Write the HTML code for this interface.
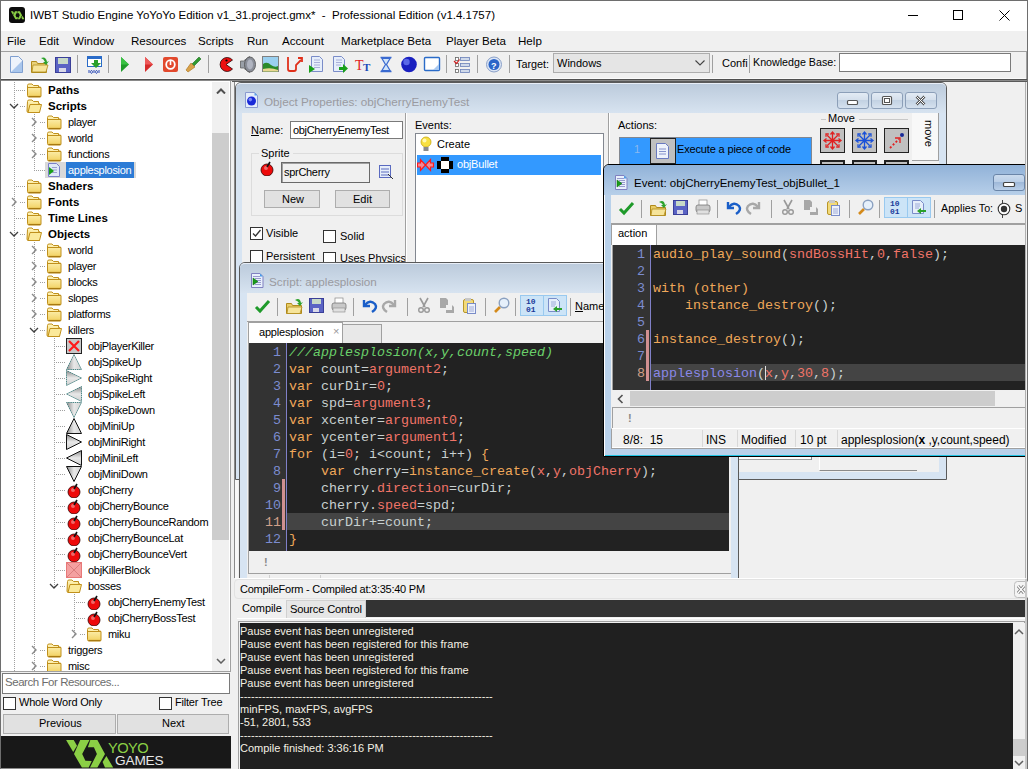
<!DOCTYPE html>
<html><head><meta charset="utf-8">
<style>
*{box-sizing:border-box;margin:0;padding:0}
html,body{width:1028px;height:769px;overflow:hidden;background:#f0f0f0;font-family:"Liberation Sans",sans-serif;font-size:11px;color:#000;position:relative}
.a{position:absolute}
.t{position:absolute;white-space:pre;line-height:1}
.mono{font-family:"Liberation Mono",monospace}
</style></head><body>
<!-- outer frame -->
<div class="a" style="left:0;top:0;width:1028px;height:769px;border-left:1px solid #6e6e6e;border-top:1px solid #6e6e6e;border-right:1px solid #6e6e6e"></div>
<!-- title bar -->
<div class="a" style="left:1px;top:1px;width:1026px;height:30px;background:#fff"></div>
<div class="a" style="left:9px;top:7px;width:16px;height:16px;background:#0c0c0c;border-radius:3px"></div>
<svg class="a" style="left:0;top:0" width="30" height="30"><g transform="translate(10.8 11.2) scale(0.29) translate(-66 -740)">
<path d="M66.1 740.1 L73.7 740.1 L77 745.8 L73.2 752.1Z" fill="#8bcf45"/>
<path d="M80.2 740.1 L89.5 740.1 L82.2 754 L85.4 760.8 L91.7 761.1 L88.7 767.6 L81.9 767.6 L74 754Z" fill="#8bcf45"/>
<path d="M90.3 740.1 L97.4 740.1 L105 754 L97.4 767.6 L90 767.6 L96.9 754 L93.9 747.2 L87.9 747.2Z" fill="#8bcf45"/>
<path d="M102.6 762.1 L106.4 755.9 L113.2 767.6 L105 767.6Z" fill="#8bcf45"/></g></svg>
<div class="t" style="left:30px;top:10px;font-size:11.5px;color:#000">IWBT Studio Engine YoYoYo Edition v1_31.project.gmx*&nbsp; -&nbsp; Professional Edition (v1.4.1757)</div>
<div class="a" style="left:908px;top:15px;width:10px;height:1px;background:#000"></div>
<div class="a" style="left:953px;top:10px;width:10px;height:10px;border:1px solid #000"></div>
<svg class="a" style="left:999px;top:10px" width="11" height="11"><path d="M0.5 0.5 L10.5 10.5 M10.5 0.5 L0.5 10.5" stroke="#000" stroke-width="1"/></svg>

<!-- menu bar -->
<div class="a" style="left:1px;top:31px;width:1026px;height:20px;background:#f0f0f0"></div>
<div class="t" style="top:35px;font-size:11.6px;left:0"><span class="t" style="left:7px">File</span><span class="t" style="left:39px">Edit</span><span class="t" style="left:73px">Window</span><span class="t" style="left:131px">Resources</span><span class="t" style="left:198px">Scripts</span><span class="t" style="left:247px">Run</span><span class="t" style="left:282px">Account</span><span class="t" style="left:341px">Marketplace Beta</span><span class="t" style="left:446px">Player Beta</span><span class="t" style="left:518px">Help</span></div>

<!-- toolbar -->
<div class="a" style="left:1px;top:51px;width:1026px;height:27px;background:#f0f0f0;border-top:1px solid #a0a0a0"></div><div class="a" style="left:1px;top:78px;width:1026px;height:1px;background:#fafafa"></div>
<div class="a" style="left:1026px;top:52px;width:1px;height:27px;background:#a0a0a0"></div>
<!-- separators -->
<div class="a" style="left:77px;top:55px;width:1px;height:18px;background:#a0a0a0"></div>
<div class="a" style="left:108px;top:55px;width:1px;height:18px;background:#a0a0a0"></div>
<div class="a" style="left:208px;top:55px;width:1px;height:18px;background:#a0a0a0"></div>
<div class="a" style="left:446px;top:55px;width:1px;height:18px;background:#a0a0a0"></div>
<div class="a" style="left:477px;top:55px;width:1px;height:18px;background:#a0a0a0"></div>
<div class="a" style="left:509px;top:55px;width:1px;height:18px;background:#a0a0a0"></div>
<div class="a" style="left:712px;top:55px;width:1px;height:18px;background:#a0a0a0"></div>
<div class="a" style="left:749px;top:55px;width:1px;height:18px;background:#a0a0a0"></div>
<!-- toolbar icons -->
<svg class="a" style="left:0;top:52px" width="510" height="26" viewBox="0 52 510 26">
 <!-- new -->
 <path d="M10.5 56.5 h8 l4 4 v12 h-12z" fill="#eef3fb" stroke="#7f9fd0"/><path d="M11 72 L22 61 V72Z" fill="#a9c6ec"/>
 <!-- open -->
 <path d="M31.5 61.5 h5 l1 2 h9 v9 h-15z" fill="#e9d27a" stroke="#b08a1c"/><path d="M33 65 h15 l-2 7 h-14z" fill="#f6e49a" stroke="#b08a1c" stroke-width="0.8"/><path d="M41 58 q5 -2 6 4 l2 -1 -3 4 -3 -3 2 0 q-1 -3 -4 -4z" fill="#2ea22e"/>
 <!-- save -->
 <rect x="55.5" y="57.5" width="15" height="15" fill="#5a63c4" stroke="#3a3f98"/><rect x="58" y="58" width="10" height="6" fill="#c7d9c7"/><rect x="59" y="68" width="7" height="4" fill="#d8d8e8"/>
 <!-- create exe -->
 <rect x="87.5" y="56.5" width="14" height="10" fill="#fff" stroke="#2a6bc8"/><rect x="88" y="57" width="13" height="2" fill="#2a6bc8"/><path d="M94 60 h4 v3 h3 l-5 5 -5 -5 h3z" fill="#2aa02a"/><path d="M89 70v3M91.5 70.5a1 1.4 0 1 0 .01 0M94 70v3M96.5 70.5a1 1.4 0 1 0 .01 0M99 70v3" stroke="#2a4ab8" stroke-width="1" fill="none"/>
 <!-- run -->
 <path d="M121 57 L129 64.5 L121 72Z" fill="#1f9a2a"/><path d="M121 57 L129 64.5 L121 64.5Z" fill="#39c143"/>
 <!-- debug -->
 <path d="M145 57 L153 64.5 L145 72Z" fill="#d52b2b"/><path d="M145 57 L153 64.5 L145 64.5Z" fill="#ee5a5a"/>
 <!-- stop -->
 <rect x="163" y="57" width="15" height="15" rx="2" fill="#e2492d"/><circle cx="170.5" cy="64.5" r="4.3" fill="none" stroke="#fff" stroke-width="1.8"/><rect x="169.7" y="61" width="1.6" height="4" fill="#fff"/>
 <!-- clean brush -->
 <path d="M192 64 l7-7 2 2 -7 7z" fill="#2f9a30" stroke="#1f6a20" stroke-width=".6"/><path d="M186 70 l5-7 4 4 -7 5z" fill="#d9a24a" stroke="#a8701a" stroke-width=".6"/>
 <!-- sprite pacman -->
 <path d="M232.5 60 A7 7 0 1 0 232.5 69 L226 64.5Z" fill="#ee1010" stroke="#200" stroke-width=".8"/><circle cx="226.5" cy="60.5" r="1.1" fill="#000"/>
 <!-- sound -->
 <path d="M240.5 61 h3 l6 -4.5 v16 l-6 -4.5 h-3z" fill="#9aa0a8" stroke="#606060" stroke-width=".8"/><ellipse cx="250" cy="64.5" rx="5.5" ry="7.5" fill="#8a8e98" stroke="#505050" stroke-width=".8"/><ellipse cx="250" cy="64.5" rx="3" ry="5" fill="#b0b4c0"/>
 <!-- background -->
 <rect x="262.5" y="56.5" width="16" height="15" fill="#9ad0f0" stroke="#808080"/><path d="M263 64 q4 -3 8 1 q4 3 7 1 v5.5 h-15z" fill="#2a8a2a"/><path d="M263 69 q8 -2 15 1 v1.5 h-15z" fill="#e8d890"/>
 <!-- path -->
 <path d="M288 57 v12 q0 2 2 2 h4 q2 0 2-2 v-4 l5-5" fill="none" stroke="#e0301a" stroke-width="1.8"/><path d="M298 58 h4 v4" fill="none" stroke="#e0301a" stroke-width="1.8"/>
 <!-- script -->
 <path d="M311.5 56.5 h8 l3 3 v12 h-11z" fill="#e6eefa" stroke="#7a8cc8"/><path d="M314 60h6M314 62.5h6M314 65h6M314 67.5h6" stroke="#9aa0d0" stroke-width=".8"/><path d="M309 65 l6 4 -6 4z" fill="#18a018"/>
 <!-- shader -->
 <path d="M333.5 56.5 h8 l3 3 v12 h-11z" fill="#e6eefa" stroke="#7a8cc8"/><path d="M336 60h6M336 62.5h6M336 65h5" stroke="#9aa0d0" stroke-width=".8"/><path d="M339 67 h4 v-3 l5 4.5 -5 4.5 v-3 h-4z" fill="#18a018"/>
 <!-- font -->
 <text x="355" y="70" font-size="14" fill="#e02020" font-family="Liberation Serif">T</text><text x="363" y="71" font-size="11" fill="#1a4ab8" font-family="Liberation Serif" font-weight="bold">T</text>
 <!-- timeline -->
 <path d="M380.5 57.5 h11 M380.5 71.5 h11" stroke="#3a6ad0" stroke-width="1.6"/><path d="M382 58.5 h8 l-3.5 6 3.5 6 h-8 l3.5-6z" fill="#d0e4fa" stroke="#3a6ad0" stroke-width="1.2"/>
 <!-- object -->
 <circle cx="409" cy="64.5" r="7.8" fill="#1a20c0"/><circle cx="406.5" cy="62" r="3.2" fill="#5a68e8"/>
 <!-- room -->
 <rect x="424.5" y="57.5" width="15" height="13" rx="1" fill="#fff" stroke="#2a6bc8" stroke-width="1.4"/><path d="M433 70 L439 64 V70Z" fill="#a8c8f0"/>
 <!-- settings -->
 <rect x="455.5" y="57.5" width="3" height="3" fill="#fff" stroke="#666" stroke-width=".8"/><rect x="460.5" y="57.5" width="9" height="3" fill="#cfd9ea" stroke="#6a80b8" stroke-width=".8"/>
 <rect x="455.5" y="63.5" width="3" height="3" fill="#fff" stroke="#666" stroke-width=".8"/><rect x="460.5" y="63.5" width="9" height="3" fill="#cfd9ea" stroke="#6a80b8" stroke-width=".8"/>
 <rect x="455.5" y="69.5" width="3" height="3" fill="#fff" stroke="#666" stroke-width=".8"/><rect x="460.5" y="69.5" width="9" height="3" fill="#cfd9ea" stroke="#6a80b8" stroke-width=".8"/>
 <path d="M454 61 l2.5 2.5 3-4" stroke="#d02020" fill="none" stroke-width="1.2"/>
 <!-- help -->
 <circle cx="494" cy="64.5" r="7.5" fill="#dbe5f5" stroke="#8aa0c8"/><circle cx="494" cy="64.5" r="5.5" fill="#2a64c8"/><text x="491" y="68.5" font-size="9" fill="#fff" font-weight="bold" font-family="Liberation Sans">?</text>
</svg>
<div class="t" style="left:516px;top:59px;font-size:10.8px">Target:</div>
<div class="a" style="left:553px;top:53px;width:157px;height:20px;background:#e5e5e5;border:1px solid #adadad"></div>
<div class="t" style="left:557px;top:58px;font-size:11px">Windows</div>
<svg class="a" style="left:695px;top:60px" width="10" height="6"><path d="M0.5 0.5 L5 5 L9.5 0.5" fill="none" stroke="#444" stroke-width="1.1"/></svg>
<div class="t" style="left:722px;top:58px;font-size:11px">Confi</div>
<div class="t" style="left:753px;top:57px;font-size:10.7px">Knowledge Base:</div>
<div class="a" style="left:839px;top:53px;width:172px;height:19px;background:#fff;border:1px solid #7a7a7a"></div>
<!-- left panel -->
<div class="a" style="left:1px;top:81px;width:230px;height:591px;background:#fff;border-right:1px solid #a0a0a0;border-bottom:1px solid #a0a0a0"></div>
<div class="a" style="left:231px;top:80px;width:3px;height:689px;background:#f0f0f0"></div>
<div class="a" style="left:1px;top:79px;width:1026px;height:1px;background:#505050"></div>
<div class="a" style="left:1px;top:80px;width:1026px;height:1px;background:#8a8a8a"></div>
<div class="a" style="left:232px;top:81px;width:795px;height:1px;background:#5a5a5a"></div>
<div class="a" style="left:1px;top:82px;width:211px;height:589px;overflow:hidden">
<svg width="0" height="0" style="position:absolute"><defs>
<linearGradient id="fg" x1="0" y1="0" x2="0" y2="1"><stop offset="0" stop-color="#fff6c0"/><stop offset="1" stop-color="#f2d160"/></linearGradient>
<linearGradient id="sg" x1="0" y1="0" x2="1" y2="0"><stop offset="0" stop-color="#8a8a8a"/><stop offset=".5" stop-color="#e8e8e8"/><stop offset="1" stop-color="#d0d0d0"/></linearGradient>
<linearGradient id="sgv" x1="0" y1="0" x2="0" y2="1"><stop offset="0" stop-color="#8a8a8a"/><stop offset=".5" stop-color="#e8e8e8"/><stop offset="1" stop-color="#d0d0d0"/></linearGradient>
<symbol id="folder" viewBox="0 0 16 16"><path d="M1.5 3.5 q0-1.5 1.5-1.5 h3 l1.5 1.5 h5 v1.5 h1.5 q1 0 1 1 v8 q0 1-1 1 h-11 q-1.5 0-1.5-1.5z" fill="url(#fg)" stroke="#c0901c"/><path d="M2 5.5 h13" stroke="#c0901c"/><path d="M2.5 14.5 h12" stroke="#a87a10" stroke-width="1.2"/></symbol>
<symbol id="folderopen" viewBox="0 0 16 16"><path d="M1.5 3.5 q0-1.5 1.5-1.5 h3 l1.5 1.5 h5 v2 h1 v9 h-11 q-1.5 0-1.5-1.5z" fill="url(#fg)" stroke="#c0901c"/><path d="M2 14.5 l2-8 h11.5 l-2 8z" fill="#fbe99a" stroke="#c0901c"/></symbol>
<symbol id="script" viewBox="0 0 16 16"><path d="M2.5 1.5 h8 l3 3 v10 h-11z" fill="#dfe8f8" stroke="#7a80c8"/><path d="M6 5.5h5M6 8h5M6 10.5h5" stroke="#9aa0d0"/><path d="M3 5 l5 4 -5 4z" fill="#18a018"/></symbol>
<symbol id="killer" viewBox="0 0 16 16"><rect x=".5" y=".5" width="15" height="15" fill="#c8c8c8" stroke="#222"/><path d="M3 3 L13 13 M13 3 L3 13" stroke="#ff1a1a" stroke-width="2.2"/></symbol>
<symbol id="spikeU" viewBox="0 0 16 16"><path d="M8 0.5 L15.5 15.5 H0.5Z" fill="url(#sg)" stroke="#3a7a7a" stroke-width=".9" stroke-dasharray="1.5 .7"/></symbol>
<symbol id="spikeD" viewBox="0 0 16 16"><path d="M8 15.5 L15.5 0.5 H0.5Z" fill="url(#sg)" stroke="#3a7a7a" stroke-width=".9" stroke-dasharray="1.5 .7"/></symbol>
<symbol id="spikeR" viewBox="0 0 16 16"><path d="M15.5 8 L0.5 15.5 V0.5Z" fill="url(#sgv)" stroke="#3a7a7a" stroke-width=".9" stroke-dasharray="1.5 .7"/></symbol>
<symbol id="spikeL" viewBox="0 0 16 16"><path d="M0.5 8 L15.5 15.5 V0.5Z" fill="url(#sgv)" stroke="#3a7a7a" stroke-width=".9" stroke-dasharray="1.5 .7"/></symbol>
<symbol id="cherry" viewBox="0 0 16 16"><circle cx="8" cy="10" r="6" fill="#ee0a0a" stroke="#300" stroke-width=".8"/><circle cx="7" cy="8" r="2" fill="#f06868"/><path d="M8 7 L11 2" stroke="#111" stroke-width="1.6"/></symbol>
<symbol id="kblock" viewBox="0 0 16 16"><rect x=".5" y=".5" width="15" height="15" fill="#f4a0a0" stroke="#e87878"/><path d="M1 1 L15 15 M15 1 L1 15" stroke="#d07070" stroke-width=".7"/></symbol>
<symbol id="mU" viewBox="0 0 16 16"><path d="M8 0.5 L15.5 15.5 H0.5Z" fill="url(#sg)" stroke="#111" stroke-width="1"/></symbol>
<symbol id="mD" viewBox="0 0 16 16"><path d="M8 15.5 L15.5 0.5 H0.5Z" fill="url(#sg)" stroke="#111" stroke-width="1"/></symbol>
<symbol id="mR" viewBox="0 0 16 16"><path d="M15.5 8 L0.5 15.5 V0.5Z" fill="url(#sgv)" stroke="#111" stroke-width="1"/></symbol>
<symbol id="mL" viewBox="0 0 16 16"><path d="M0.5 8 L15.5 15.5 V0.5Z" fill="url(#sgv)" stroke="#111" stroke-width="1"/></symbol>
</defs></svg>
<div class="a" style="left:13px;top:0px;width:1px;height:589px;background:repeating-linear-gradient(#a0a0a0 0 1px,transparent 1px 2px)"></div>
<div class="a" style="left:33px;top:32px;width:1px;height:57px;background:repeating-linear-gradient(#a0a0a0 0 1px,transparent 1px 2px)"></div>
<div class="a" style="left:33px;top:160px;width:1px;height:429px;background:repeating-linear-gradient(#a0a0a0 0 1px,transparent 1px 2px)"></div>
<div class="a" style="left:53px;top:256px;width:1px;height:249px;background:repeating-linear-gradient(#a0a0a0 0 1px,transparent 1px 2px)"></div>
<div class="a" style="left:73px;top:512px;width:1px;height:41px;background:repeating-linear-gradient(#a0a0a0 0 1px,transparent 1px 2px)"></div>
<div class="a" style="left:13px;top:8px;width:12px;height:1px;background:repeating-linear-gradient(90deg,#a0a0a0 0 1px,transparent 1px 2px)"></div>
<svg class="a" style="left:25px;top:0px" width="16" height="16"><use href="#folder"/></svg>
<div class="t" style="left:47px;top:3px;font-size:11.5px;font-weight:bold;color:#000">Paths</div>
<div class="a" style="left:19px;top:24px;width:6px;height:1px;background:repeating-linear-gradient(90deg,#a0a0a0 0 1px,transparent 1px 2px)"></div>
<svg class="a" style="left:8px;top:21px" width="10" height="6"><path d="M1 1 L5 5 L9 1" fill="none" stroke="#404040" stroke-width="1.3"/></svg>
<svg class="a" style="left:25px;top:16px" width="16" height="16"><use href="#folderopen"/></svg>
<div class="t" style="left:47px;top:19px;font-size:11.5px;font-weight:bold;color:#000">Scripts</div>
<div class="a" style="left:39px;top:40px;width:6px;height:1px;background:repeating-linear-gradient(90deg,#a0a0a0 0 1px,transparent 1px 2px)"></div>
<svg class="a" style="left:30px;top:35px" width="6" height="10"><path d="M1 1 L5 5 L1 9" fill="none" stroke="#8a8a8a" stroke-width="1.4"/></svg>
<svg class="a" style="left:45px;top:32px" width="16" height="16"><use href="#folder"/></svg>
<div class="t" style="left:67px;top:35px;font-size:11px;letter-spacing:-0.3px;color:#000">player</div>
<div class="a" style="left:39px;top:56px;width:6px;height:1px;background:repeating-linear-gradient(90deg,#a0a0a0 0 1px,transparent 1px 2px)"></div>
<svg class="a" style="left:30px;top:51px" width="6" height="10"><path d="M1 1 L5 5 L1 9" fill="none" stroke="#8a8a8a" stroke-width="1.4"/></svg>
<svg class="a" style="left:45px;top:48px" width="16" height="16"><use href="#folder"/></svg>
<div class="t" style="left:67px;top:51px;font-size:11px;letter-spacing:-0.3px;color:#000">world</div>
<div class="a" style="left:39px;top:72px;width:6px;height:1px;background:repeating-linear-gradient(90deg,#a0a0a0 0 1px,transparent 1px 2px)"></div>
<svg class="a" style="left:30px;top:67px" width="6" height="10"><path d="M1 1 L5 5 L1 9" fill="none" stroke="#8a8a8a" stroke-width="1.4"/></svg>
<svg class="a" style="left:45px;top:64px" width="16" height="16"><use href="#folder"/></svg>
<div class="t" style="left:67px;top:67px;font-size:11px;letter-spacing:-0.3px;color:#000">functions</div>
<div class="a" style="left:33px;top:88px;width:12px;height:1px;background:repeating-linear-gradient(90deg,#a0a0a0 0 1px,transparent 1px 2px)"></div>
<div class="a" style="left:44px;top:80px;width:91px;height:16px;background:#d9d9d9"></div>
<div class="a" style="left:65px;top:80px;width:68px;height:16px;background:#2b7bd6"></div>
<svg class="a" style="left:45px;top:80px" width="16" height="16"><use href="#script"/></svg>
<div class="t" style="left:67px;top:83px;font-size:11px;letter-spacing:-0.3px;color:#fff">applesplosion</div>
<div class="a" style="left:13px;top:104px;width:12px;height:1px;background:repeating-linear-gradient(90deg,#a0a0a0 0 1px,transparent 1px 2px)"></div>
<svg class="a" style="left:25px;top:96px" width="16" height="16"><use href="#folder"/></svg>
<div class="t" style="left:47px;top:99px;font-size:11.5px;font-weight:bold;color:#000">Shaders</div>
<div class="a" style="left:19px;top:120px;width:6px;height:1px;background:repeating-linear-gradient(90deg,#a0a0a0 0 1px,transparent 1px 2px)"></div>
<svg class="a" style="left:10px;top:115px" width="6" height="10"><path d="M1 1 L5 5 L1 9" fill="none" stroke="#8a8a8a" stroke-width="1.4"/></svg>
<svg class="a" style="left:25px;top:112px" width="16" height="16"><use href="#folder"/></svg>
<div class="t" style="left:47px;top:115px;font-size:11.5px;font-weight:bold;color:#000">Fonts</div>
<div class="a" style="left:13px;top:136px;width:12px;height:1px;background:repeating-linear-gradient(90deg,#a0a0a0 0 1px,transparent 1px 2px)"></div>
<svg class="a" style="left:25px;top:128px" width="16" height="16"><use href="#folder"/></svg>
<div class="t" style="left:47px;top:131px;font-size:11.5px;font-weight:bold;color:#000">Time Lines</div>
<div class="a" style="left:19px;top:152px;width:6px;height:1px;background:repeating-linear-gradient(90deg,#a0a0a0 0 1px,transparent 1px 2px)"></div>
<svg class="a" style="left:8px;top:149px" width="10" height="6"><path d="M1 1 L5 5 L9 1" fill="none" stroke="#404040" stroke-width="1.3"/></svg>
<svg class="a" style="left:25px;top:144px" width="16" height="16"><use href="#folderopen"/></svg>
<div class="t" style="left:47px;top:147px;font-size:11.5px;font-weight:bold;color:#000">Objects</div>
<div class="a" style="left:39px;top:168px;width:6px;height:1px;background:repeating-linear-gradient(90deg,#a0a0a0 0 1px,transparent 1px 2px)"></div>
<svg class="a" style="left:30px;top:163px" width="6" height="10"><path d="M1 1 L5 5 L1 9" fill="none" stroke="#8a8a8a" stroke-width="1.4"/></svg>
<svg class="a" style="left:45px;top:160px" width="16" height="16"><use href="#folder"/></svg>
<div class="t" style="left:67px;top:163px;font-size:11px;letter-spacing:-0.3px;color:#000">world</div>
<div class="a" style="left:39px;top:184px;width:6px;height:1px;background:repeating-linear-gradient(90deg,#a0a0a0 0 1px,transparent 1px 2px)"></div>
<svg class="a" style="left:30px;top:179px" width="6" height="10"><path d="M1 1 L5 5 L1 9" fill="none" stroke="#8a8a8a" stroke-width="1.4"/></svg>
<svg class="a" style="left:45px;top:176px" width="16" height="16"><use href="#folder"/></svg>
<div class="t" style="left:67px;top:179px;font-size:11px;letter-spacing:-0.3px;color:#000">player</div>
<div class="a" style="left:39px;top:200px;width:6px;height:1px;background:repeating-linear-gradient(90deg,#a0a0a0 0 1px,transparent 1px 2px)"></div>
<svg class="a" style="left:30px;top:195px" width="6" height="10"><path d="M1 1 L5 5 L1 9" fill="none" stroke="#8a8a8a" stroke-width="1.4"/></svg>
<svg class="a" style="left:45px;top:192px" width="16" height="16"><use href="#folder"/></svg>
<div class="t" style="left:67px;top:195px;font-size:11px;letter-spacing:-0.3px;color:#000">blocks</div>
<div class="a" style="left:39px;top:216px;width:6px;height:1px;background:repeating-linear-gradient(90deg,#a0a0a0 0 1px,transparent 1px 2px)"></div>
<svg class="a" style="left:30px;top:211px" width="6" height="10"><path d="M1 1 L5 5 L1 9" fill="none" stroke="#8a8a8a" stroke-width="1.4"/></svg>
<svg class="a" style="left:45px;top:208px" width="16" height="16"><use href="#folder"/></svg>
<div class="t" style="left:67px;top:211px;font-size:11px;letter-spacing:-0.3px;color:#000">slopes</div>
<div class="a" style="left:39px;top:232px;width:6px;height:1px;background:repeating-linear-gradient(90deg,#a0a0a0 0 1px,transparent 1px 2px)"></div>
<svg class="a" style="left:30px;top:227px" width="6" height="10"><path d="M1 1 L5 5 L1 9" fill="none" stroke="#8a8a8a" stroke-width="1.4"/></svg>
<svg class="a" style="left:45px;top:224px" width="16" height="16"><use href="#folder"/></svg>
<div class="t" style="left:67px;top:227px;font-size:11px;letter-spacing:-0.3px;color:#000">platforms</div>
<div class="a" style="left:39px;top:248px;width:6px;height:1px;background:repeating-linear-gradient(90deg,#a0a0a0 0 1px,transparent 1px 2px)"></div>
<svg class="a" style="left:28px;top:245px" width="10" height="6"><path d="M1 1 L5 5 L9 1" fill="none" stroke="#404040" stroke-width="1.3"/></svg>
<svg class="a" style="left:45px;top:240px" width="16" height="16"><use href="#folderopen"/></svg>
<div class="t" style="left:67px;top:243px;font-size:11px;letter-spacing:-0.3px;color:#000">killers</div>
<div class="a" style="left:53px;top:264px;width:12px;height:1px;background:repeating-linear-gradient(90deg,#a0a0a0 0 1px,transparent 1px 2px)"></div>
<svg class="a" style="left:65px;top:256px" width="16" height="16"><use href="#killer"/></svg>
<div class="t" style="left:87px;top:259px;font-size:11px;letter-spacing:-0.3px;color:#000">objPlayerKiller</div>
<div class="a" style="left:53px;top:280px;width:12px;height:1px;background:repeating-linear-gradient(90deg,#a0a0a0 0 1px,transparent 1px 2px)"></div>
<svg class="a" style="left:65px;top:272px" width="16" height="16"><use href="#spikeU"/></svg>
<div class="t" style="left:87px;top:275px;font-size:11px;letter-spacing:-0.3px;color:#000">objSpikeUp</div>
<div class="a" style="left:53px;top:296px;width:12px;height:1px;background:repeating-linear-gradient(90deg,#a0a0a0 0 1px,transparent 1px 2px)"></div>
<svg class="a" style="left:65px;top:288px" width="16" height="16"><use href="#spikeR"/></svg>
<div class="t" style="left:87px;top:291px;font-size:11px;letter-spacing:-0.3px;color:#000">objSpikeRight</div>
<div class="a" style="left:53px;top:312px;width:12px;height:1px;background:repeating-linear-gradient(90deg,#a0a0a0 0 1px,transparent 1px 2px)"></div>
<svg class="a" style="left:65px;top:304px" width="16" height="16"><use href="#spikeL"/></svg>
<div class="t" style="left:87px;top:307px;font-size:11px;letter-spacing:-0.3px;color:#000">objSpikeLeft</div>
<div class="a" style="left:53px;top:328px;width:12px;height:1px;background:repeating-linear-gradient(90deg,#a0a0a0 0 1px,transparent 1px 2px)"></div>
<svg class="a" style="left:65px;top:320px" width="16" height="16"><use href="#spikeD"/></svg>
<div class="t" style="left:87px;top:323px;font-size:11px;letter-spacing:-0.3px;color:#000">objSpikeDown</div>
<div class="a" style="left:53px;top:344px;width:12px;height:1px;background:repeating-linear-gradient(90deg,#a0a0a0 0 1px,transparent 1px 2px)"></div>
<svg class="a" style="left:65px;top:336px" width="16" height="16"><use href="#mU"/></svg>
<div class="t" style="left:87px;top:339px;font-size:11px;letter-spacing:-0.3px;color:#000">objMiniUp</div>
<div class="a" style="left:53px;top:360px;width:12px;height:1px;background:repeating-linear-gradient(90deg,#a0a0a0 0 1px,transparent 1px 2px)"></div>
<svg class="a" style="left:65px;top:352px" width="16" height="16"><use href="#mR"/></svg>
<div class="t" style="left:87px;top:355px;font-size:11px;letter-spacing:-0.3px;color:#000">objMiniRight</div>
<div class="a" style="left:53px;top:376px;width:12px;height:1px;background:repeating-linear-gradient(90deg,#a0a0a0 0 1px,transparent 1px 2px)"></div>
<svg class="a" style="left:65px;top:368px" width="16" height="16"><use href="#mL"/></svg>
<div class="t" style="left:87px;top:371px;font-size:11px;letter-spacing:-0.3px;color:#000">objMiniLeft</div>
<div class="a" style="left:53px;top:392px;width:12px;height:1px;background:repeating-linear-gradient(90deg,#a0a0a0 0 1px,transparent 1px 2px)"></div>
<svg class="a" style="left:65px;top:384px" width="16" height="16"><use href="#mD"/></svg>
<div class="t" style="left:87px;top:387px;font-size:11px;letter-spacing:-0.3px;color:#000">objMiniDown</div>
<div class="a" style="left:53px;top:408px;width:12px;height:1px;background:repeating-linear-gradient(90deg,#a0a0a0 0 1px,transparent 1px 2px)"></div>
<svg class="a" style="left:65px;top:400px" width="16" height="16"><use href="#cherry"/></svg>
<div class="t" style="left:87px;top:403px;font-size:11px;letter-spacing:-0.3px;color:#000">objCherry</div>
<div class="a" style="left:53px;top:424px;width:12px;height:1px;background:repeating-linear-gradient(90deg,#a0a0a0 0 1px,transparent 1px 2px)"></div>
<svg class="a" style="left:65px;top:416px" width="16" height="16"><use href="#cherry"/></svg>
<div class="t" style="left:87px;top:419px;font-size:11px;letter-spacing:-0.3px;color:#000">objCherryBounce</div>
<div class="a" style="left:53px;top:440px;width:12px;height:1px;background:repeating-linear-gradient(90deg,#a0a0a0 0 1px,transparent 1px 2px)"></div>
<svg class="a" style="left:65px;top:432px" width="16" height="16"><use href="#cherry"/></svg>
<div class="t" style="left:87px;top:435px;font-size:11px;letter-spacing:-0.3px;color:#000">objCherryBounceRandom</div>
<div class="a" style="left:53px;top:456px;width:12px;height:1px;background:repeating-linear-gradient(90deg,#a0a0a0 0 1px,transparent 1px 2px)"></div>
<svg class="a" style="left:65px;top:448px" width="16" height="16"><use href="#cherry"/></svg>
<div class="t" style="left:87px;top:451px;font-size:11px;letter-spacing:-0.3px;color:#000">objCherryBounceLat</div>
<div class="a" style="left:53px;top:472px;width:12px;height:1px;background:repeating-linear-gradient(90deg,#a0a0a0 0 1px,transparent 1px 2px)"></div>
<svg class="a" style="left:65px;top:464px" width="16" height="16"><use href="#cherry"/></svg>
<div class="t" style="left:87px;top:467px;font-size:11px;letter-spacing:-0.3px;color:#000">objCherryBounceVert</div>
<div class="a" style="left:53px;top:488px;width:12px;height:1px;background:repeating-linear-gradient(90deg,#a0a0a0 0 1px,transparent 1px 2px)"></div>
<svg class="a" style="left:65px;top:480px" width="16" height="16"><use href="#kblock"/></svg>
<div class="t" style="left:87px;top:483px;font-size:11px;letter-spacing:-0.3px;color:#000">objKillerBlock</div>
<div class="a" style="left:59px;top:504px;width:6px;height:1px;background:repeating-linear-gradient(90deg,#a0a0a0 0 1px,transparent 1px 2px)"></div>
<svg class="a" style="left:48px;top:501px" width="10" height="6"><path d="M1 1 L5 5 L9 1" fill="none" stroke="#404040" stroke-width="1.3"/></svg>
<svg class="a" style="left:65px;top:496px" width="16" height="16"><use href="#folderopen"/></svg>
<div class="t" style="left:87px;top:499px;font-size:11px;letter-spacing:-0.3px;color:#000">bosses</div>
<div class="a" style="left:73px;top:520px;width:12px;height:1px;background:repeating-linear-gradient(90deg,#a0a0a0 0 1px,transparent 1px 2px)"></div>
<svg class="a" style="left:85px;top:512px" width="16" height="16"><use href="#cherry"/></svg>
<div class="t" style="left:107px;top:515px;font-size:11px;letter-spacing:-0.3px;color:#000">objCherryEnemyTest</div>
<div class="a" style="left:73px;top:536px;width:12px;height:1px;background:repeating-linear-gradient(90deg,#a0a0a0 0 1px,transparent 1px 2px)"></div>
<svg class="a" style="left:85px;top:528px" width="16" height="16"><use href="#cherry"/></svg>
<div class="t" style="left:107px;top:531px;font-size:11px;letter-spacing:-0.3px;color:#000">objCherryBossTest</div>
<div class="a" style="left:79px;top:552px;width:6px;height:1px;background:repeating-linear-gradient(90deg,#a0a0a0 0 1px,transparent 1px 2px)"></div>
<svg class="a" style="left:70px;top:547px" width="6" height="10"><path d="M1 1 L5 5 L1 9" fill="none" stroke="#8a8a8a" stroke-width="1.4"/></svg>
<svg class="a" style="left:85px;top:544px" width="16" height="16"><use href="#folder"/></svg>
<div class="t" style="left:107px;top:547px;font-size:11px;letter-spacing:-0.3px;color:#000">miku</div>
<div class="a" style="left:39px;top:568px;width:6px;height:1px;background:repeating-linear-gradient(90deg,#a0a0a0 0 1px,transparent 1px 2px)"></div>
<svg class="a" style="left:30px;top:563px" width="6" height="10"><path d="M1 1 L5 5 L1 9" fill="none" stroke="#8a8a8a" stroke-width="1.4"/></svg>
<svg class="a" style="left:45px;top:560px" width="16" height="16"><use href="#folder"/></svg>
<div class="t" style="left:67px;top:563px;font-size:11px;letter-spacing:-0.3px;color:#000">triggers</div>
<div class="a" style="left:39px;top:584px;width:6px;height:1px;background:repeating-linear-gradient(90deg,#a0a0a0 0 1px,transparent 1px 2px)"></div>
<svg class="a" style="left:30px;top:579px" width="6" height="10"><path d="M1 1 L5 5 L1 9" fill="none" stroke="#8a8a8a" stroke-width="1.4"/></svg>
<svg class="a" style="left:45px;top:576px" width="16" height="16"><use href="#folder"/></svg>
<div class="t" style="left:67px;top:579px;font-size:11px;letter-spacing:-0.3px;color:#000">misc</div>
</div>
<div class="a" style="left:212px;top:82px;width:17px;height:589px;background:#f0f0f0"></div>
<div class="a" style="left:212px;top:133px;width:17px;height:407px;background:#cdcdcd"></div>
<svg class="a" style="left:216px;top:87.5px" width="10" height="6"><path d="M1 5.5 L5 1.5 L9 5.5" fill="none" stroke="#505050" stroke-width="2"/></svg>
<svg class="a" style="left:216px;top:658px" width="10" height="6"><path d="M1 1 L5 5 L9 1" fill="none" stroke="#606060" stroke-width="1.5"/></svg>
<div class="a" style="left:2px;top:673px;width:228px;height:21px;background:#fff;border:1px solid #7a7a7a"></div>
<div class="t" style="left:5px;top:677px;font-size:11.5px;letter-spacing:-0.45px;color:#6d6d6d">Search For Resources...</div>
<div class="a" style="left:3px;top:697px;width:13px;height:13px;background:#fff;border:1px solid #333"></div>
<div class="t" style="left:19px;top:697px;font-size:11px;letter-spacing:-0.2px">Whole Word Only</div>
<div class="a" style="left:159px;top:697px;width:13px;height:13px;background:#fff;border:1px solid #333"></div>
<div class="t" style="left:175px;top:697px;font-size:11px;letter-spacing:-0.2px">Filter Tree</div>
<div class="a" style="left:3px;top:714px;width:113px;height:20px;background:#e1e1e1;border:1px solid #adadad"></div>
<div class="t" style="left:39px;top:718px;font-size:11px">Previous</div>
<div class="a" style="left:117px;top:714px;width:112px;height:20px;background:#e1e1e1;border:1px solid #adadad"></div>
<div class="t" style="left:162px;top:718px;font-size:11px">Next</div>
<div class="a" style="left:1px;top:736px;width:230px;height:33px;background:#181818"></div>
<svg class="a" style="left:0;top:736px" width="231" height="33" viewBox="0 736 231 33">
<path d="M66.1 740.1 L73.7 740.1 L77 745.8 L73.2 752.1Z" fill="#8bcf45"/>
<path d="M80.2 740.1 L89.5 740.1 L82.2 754 L85.4 760.8 L91.7 761.1 L88.7 767.6 L81.9 767.6 L74 754Z" fill="#8bcf45"/>
<path d="M90.3 740.1 L97.4 740.1 L105 754 L97.4 767.6 L90 767.6 L96.9 754 L93.9 747.2 L87.9 747.2Z" fill="#8bcf45"/>
<path d="M102.6 762.1 L106.4 755.9 L113.2 767.6 L105 767.6Z" fill="#8bcf45"/>
</svg>
<div class="t" style="left:108px;top:741px;font-size:14.7px;color:#8bcf45;letter-spacing:-0.6px">YOYO</div>
<div class="t" style="left:115px;top:754px;font-size:13.7px;color:#e8e8e8;letter-spacing:-0.2px">GAMES</div>
<div class="a" style="left:1px;top:768px;width:230px;height:1px;background:#8a8a8a"></div><div class="a" style="left:234px;top:82px;width:794px;height:496px;background:#f0f0f0"></div>
<div class="a" style="left:234px;top:82px;width:1px;height:496px;background:#8a8a8a"></div>
<div class="a" style="left:235px;top:82px;width:3px;height:496px;background:#f8f8f8"></div>
<svg width="0" height="0" style="position:absolute"><defs>
<linearGradient id="tbi" x1="0" y1="0" x2="0" y2="1"><stop offset="0" stop-color="#bfcfe0"/><stop offset="1" stop-color="#d9e5f2"/></linearGradient>
<linearGradient id="tba" x1="0" y1="0" x2="0" y2="1"><stop offset="0" stop-color="#8fb0d6"/><stop offset="1" stop-color="#b9d1ea"/></linearGradient>
<symbol id="ed_tb" viewBox="0 0 330 28">
 <rect x="30" y="5" width="1" height="18" fill="#a0a0a0"/>
 <rect x="106" y="5" width="1" height="18" fill="#a0a0a0"/>
 <rect x="160" y="5" width="1" height="18" fill="#a0a0a0"/>
 <rect x="238" y="5" width="1" height="18" fill="#a0a0a0"/>
 <rect x="268" y="5" width="1" height="18" fill="#a0a0a0"/>
 <rect x="273.5" y="2.5" width="23" height="20" fill="#cce4f7" stroke="#99c9ef"/><rect x="296.5" y="2.5" width="23" height="20" fill="#cce4f7" stroke="#99c9ef"/>
 <rect x="323" y="5" width="1" height="18" fill="#a0a0a0"/>
 <g transform="translate(0,-2)">
 <path d="M9 16 l4 4 l9-10" fill="none" stroke="#1f9a2a" stroke-width="3"/>
 <path d="M39.5 12.5 h5 l1 2 h9 v8 h-15z" fill="#e8cc66" stroke="#b08a1c"/><path d="M41 16 h14 l-2 6.5 h-13z" fill="#f6e49a" stroke="#b08a1c" stroke-width=".8"/><path d="M48 9 q5-3 6 3 l2-1 -3 4 -3-3 2 0 q-1-2-4-3z" fill="#2ea22e"/>
 <rect x="62.5" y="7.5" width="14" height="14" fill="#5a63c4" stroke="#3a3f98"/><rect x="65" y="8" width="9" height="5" fill="#c7d9c7"/><rect x="66" y="17" width="6" height="4" fill="#d8d8e8"/>
 <rect x="88" y="7" width="8" height="6" fill="#fff" stroke="#888" stroke-width=".7"/><rect x="85" y="12" width="14" height="7" rx="2" fill="#c8c8c8" stroke="#777" stroke-width=".8"/><rect x="86" y="17" width="12" height="4" fill="#e0e0e0" stroke="#888" stroke-width=".6"/>
 <path d="M117 9 v6 h6" fill="none" stroke="#1a5ec8" stroke-width="2.4"/><path d="M118 14 q5-6 10-1 q3 4-3 8" fill="none" stroke="#1a5ec8" stroke-width="2.4"/>
 <path d="M148 9 v6 h-6" fill="none" stroke="#a8a8a8" stroke-width="2.4"/><path d="M147 14 q-5-6-10-1 q-3 4 3 8" fill="none" stroke="#a8a8a8" stroke-width="2.4"/>
 <path d="M173 7 l5 9 M181 7 l-5 9" stroke="#999" stroke-width="1.6"/><circle cx="174" cy="19" r="2.3" fill="none" stroke="#999" stroke-width="1.4"/><circle cx="180" cy="19" r="2.3" fill="none" stroke="#999" stroke-width="1.4"/>
 <path d="M193 7 h6 l2 2 v5 h4 l2 2 v6 h-8 v-5 h-6z" fill="#a8a8a8"/><rect x="199" y="14" width="6" height="5" fill="#f0f0f0"/>
 <rect x="216.5" y="8.5" width="10" height="13" rx="1.5" fill="#f2da7a" stroke="#b8962a"/><rect x="218" y="7" width="6" height="3" fill="#c8c8c8"/><rect x="220.5" y="12.5" width="8" height="10" fill="#eef2fb" stroke="#7a8cc8"/><path d="M222 16h5M222 18h5M222 20h5" stroke="#8a9ad0" stroke-width=".8"/>
 <path d="M248 21 l5-5" stroke="#d48a1a" stroke-width="2.6"/><circle cx="257" cy="12" r="4.8" fill="#e6f0fb" stroke="#8aa0c0" stroke-width="1.4"/>
 <text x="279" y="13" font-size="8" fill="#1a3a9a" font-family="Liberation Mono" font-weight="bold">10</text><text x="279" y="21" font-size="8" fill="#1a3a9a" font-family="Liberation Mono" font-weight="bold">01</text>
 <path d="M301.5 7.5 h8 l3 3 v10 h-11z" fill="#e6eefa" stroke="#7a8cc8"/><path d="M304 11h5M304 13h5M304 15h4" stroke="#8a9ad0" stroke-width=".8"/><path d="M306 18 l4-3 v2 h5 v2 h-5 v2z" fill="#2aa02a"/>

 </g>
</symbol>
<symbol id="winbtn" viewBox="0 0 32 17"><rect x=".5" y=".5" width="31" height="16" rx="2.5" fill="url(#btng)" stroke="#8c9fb8"/></symbol>
<linearGradient id="btng" x1="0" y1="0" x2="0" y2="1"><stop offset="0" stop-color="#e4ecf5"/><stop offset=".5" stop-color="#d3deeb"/><stop offset=".5" stop-color="#c3d2e3"/><stop offset="1" stop-color="#d6e2ef"/></linearGradient>
<linearGradient id="btnga" x1="0" y1="0" x2="0" y2="1"><stop offset="0" stop-color="#cddcee"/><stop offset=".5" stop-color="#b8cde6"/><stop offset=".5" stop-color="#9fb9d9"/><stop offset="1" stop-color="#bcd1ea"/></linearGradient>
</defs></svg>
<svg width="0" height="0" style="position:absolute"><defs><symbol id="objic" viewBox="0 0 13 16"><path d="M.5 .5 h9 l3 3 v12 h-12z" fill="#e6eefa" stroke="#8a9ad0"/><path d="M9.5 .5 v3 h3" fill="#5aa0e8"/><circle cx="6.5" cy="9" r="4.5" fill="#1a2ad8"/><circle cx="5.3" cy="7.6" r="1.8" fill="#7a8af8"/></symbol><symbol id="scric" viewBox="0 0 13 16"><path d="M.5 .5 h8.5 l3 3 v11 h-11.5z" fill="#e8f0fc" stroke="#8080c0"/><path d="M9 .5 v3 h3z" fill="#4a9ae8"/><path d="M2 3.5h7M4 5.5h6M4 7.5h6M4 9.5h6M4 11.5h6" stroke="#9090c8" stroke-width=".9"/><path d="M2 5 l5 3.5 -5 3.5z" fill="#1a9a1a" stroke="#0a6a0a" stroke-width=".5"/></symbol></defs></svg>
<div class="a" style="left:235px;top:82px;width:712px;height:398px;background:#d7e4f2;border:1px solid #5a5a5a;border-radius:6px 6px 0 0"></div>
<div class="a" style="left:236px;top:83px;width:710px;height:30px;background:linear-gradient(#bccbdc,#d7e3f0);border-radius:5px 5px 0 0;border-top:1px solid #e8eef7"></div>
<svg class="a" style="left:245px;top:92px" width="13" height="16"><use href="#objic"/></svg>
<div class="t" style="left:264px;top:96px;font-size:11.7px;color:#9a9aa0">Object Properties: objCherryEnemyTest</div>
<svg class="a" style="left:837px;top:92px" width="32" height="17"><use href="#winbtn"/></svg>
<svg class="a" style="left:871px;top:92px" width="32" height="17"><use href="#winbtn"/></svg>
<svg class="a" style="left:905px;top:92px" width="32" height="17"><use href="#winbtn"/></svg>
<svg class="a" style="left:837px;top:92px" width="100" height="17"><rect x="10.5" y="8.5" width="10" height="4" rx="1" fill="#fff" stroke="#555" stroke-width="1.2"/><rect x="45.5" y="4.5" width="9" height="8" rx="1" fill="#fff" stroke="#555" stroke-width="1.2"/><rect x="47.5" y="6.5" width="5" height="4" fill="none" stroke="#555" stroke-width="1"/><path d="M79.5 4.5 l8 8 M87.5 4.5 l-8 8" stroke="#555" stroke-width="2.6"/><path d="M79.5 4.5 l8 8 M87.5 4.5 l-8 8" stroke="#fff" stroke-width="1"/></svg>
<div class="a" style="left:242px;top:113px;width:697px;height:359px;background:#f0f0f0"></div>
<div class="t" style="left:251px;top:125px;font-size:11px"><u>N</u>ame:</div>
<div class="a" style="left:290px;top:121px;width:113px;height:18px;background:#fff;border:1px solid #7a7a7a"></div>
<div class="t" style="left:293px;top:125px;font-size:11px;letter-spacing:-0.35px">objCherryEnemyTest</div>
<div class="a" style="left:251px;top:153px;width:152px;height:63px;border:1px solid #dcdcdc"></div>
<div class="a" style="left:259px;top:147px;width:34px;height:12px;background:#f0f0f0"></div>
<div class="t" style="left:261px;top:148px;font-size:11px">Sprite</div>
<svg class="a" style="left:259px;top:160px" width="16" height="16"><use href="#cherry"/></svg>
<div class="a" style="left:281px;top:162px;width:89px;height:21px;background:#f0f0f0;border:1px solid #6a6a6a;box-shadow:inset 1px 1px 0 #a0a0a0"></div>
<div class="t" style="left:284px;top:167px;font-size:11px;letter-spacing:-0.3px">sprCherry</div>
<svg class="a" style="left:378px;top:164px" width="16" height="16"><rect x="1.5" y="1.5" width="11" height="12" fill="#e6eefa" stroke="#5a6ac0"/><path d="M3 5h8M3 8h8M3 11h8" stroke="#5a6ac0"/><path d="M10 10 l5 5" stroke="#333"/></svg>
<div class="a" style="left:264px;top:190px;width:56px;height:18px;background:#e1e1e1;border:1px solid #adadad"></div>
<div class="t" style="left:282px;top:194px;font-size:11px">New</div>
<div class="a" style="left:335px;top:190px;width:55px;height:18px;background:#e1e1e1;border:1px solid #adadad"></div>
<div class="t" style="left:353px;top:194px;font-size:11px">Edit</div>
<div class="a" style="left:250px;top:227px;width:13px;height:13px;background:#fff;border:1px solid #333"></div>
<svg class="a" style="left:251px;top:228px" width="11" height="11"><path d="M2 5.5 l2.5 2.5 l5-6" fill="none" stroke="#333" stroke-width="1.3"/></svg>
<div class="t" style="left:266px;top:228px;font-size:11px">Visible</div>
<div class="a" style="left:323px;top:230px;width:13px;height:13px;background:#fff;border:1px solid #333"></div>
<div class="t" style="left:340px;top:231px;font-size:11px">Solid</div>
<div class="a" style="left:250px;top:250px;width:13px;height:13px;background:#fff;border:1px solid #333"></div>
<div class="t" style="left:266px;top:251px;font-size:11px">Persistent</div>
<div class="a" style="left:323px;top:252px;width:13px;height:13px;background:#fff;border:1px solid #333"></div>
<div class="t" style="left:340px;top:253px;font-size:11px">Uses Physics</div>
<div class="a" style="left:405px;top:113px;width:1px;height:359px;background:#a0a0a0"></div>
<div class="a" style="left:406px;top:113px;width:1px;height:359px;background:#fff"></div>
<div class="t" style="left:415px;top:120px;font-size:11px">Events:</div>
<div class="a" style="left:415px;top:133px;width:189px;height:340px;background:#fff;border:1px solid #828790"></div>
<svg class="a" style="left:418px;top:136px" width="16" height="16"><circle cx="8" cy="6" r="5" fill="#f8e040" stroke="#c8a810" stroke-width=".8"/><circle cx="6.5" cy="4.5" r="2" fill="#fff8b0"/><rect x="5.5" y="11" width="5" height="4" fill="#8a8a8a"/></svg>
<div class="t" style="left:437px;top:139px;font-size:11px">Create</div>
<div class="a" style="left:417px;top:155px;width:184px;height:20px;background:#3399ff"></div>
<svg class="a" style="left:417px;top:157px" width="37" height="16"><path d="M0.5 6 h3 v-3.5 l5 5.5 -5 5.5 v-3.5 h-3z M16.5 6 h-3 v-3.5 l-5 5.5 5 5.5 v-3.5 h3z" fill="#f08a9a" stroke="#ff1a1a" stroke-width="1.2"/><path d="M24 0h8v4h4v8h-4v4h-8v-4h-4v-8h4z" fill="#000"/><rect x="24" y="4" width="8" height="8" fill="#fff"/></svg>
<div class="t" style="left:457px;top:159px;font-size:11px;color:#fff;letter-spacing:-0.2px">objBullet</div>
<div class="a" style="left:608px;top:113px;width:1px;height:359px;background:#a0a0a0"></div>
<div class="a" style="left:609px;top:113px;width:1px;height:359px;background:#fff"></div>
<div class="t" style="left:618px;top:120px;font-size:11px">Actions:</div>
<div class="a" style="left:619px;top:137px;width:193px;height:323px;background:#fff;border:1px solid #828790"></div>
<div class="a" style="left:620px;top:138px;width:191px;height:26px;background:#3399ff"></div>
<div class="t" style="left:634px;top:144px;font-size:11px;color:#8ab8f0">1</div>
<div class="a" style="left:650px;top:138px;width:26px;height:26px;background:#c0c0c0;border:1px solid #222"></div>
<svg class="a" style="left:655px;top:142px" width="16" height="18"><path d="M1.5 1.5 h9 l3 3 v12 h-12z" fill="#eef2fb" stroke="#6a7ac0"/><path d="M4 7h7M4 9.5h7M4 12h7" stroke="#6a7ac0" stroke-width=".8"/></svg>
<div class="t" style="left:677px;top:144px;font-size:11px;letter-spacing:-0.15px">Execute a piece of code</div>
<div class="a" style="left:819px;top:113px;width:120px;height:359px;background:#f0f0f0"></div>
<div class="t" style="left:828px;top:113px;font-size:11px">Move</div>
<div class="a" style="left:821px;top:119px;width:5px;height:1px;background:#c8c8c8"></div>
<div class="a" style="left:859px;top:119px;width:49px;height:1px;background:#c8c8c8"></div>
<div class="a" style="left:820px;top:128px;width:25px;height:25px;background:#c0c0c0;border:1.5px solid #222"></div>
<div class="a" style="left:852px;top:128px;width:25px;height:25px;background:#c0c0c0;border:1.5px solid #222"></div>
<div class="a" style="left:884px;top:128px;width:25px;height:25px;background:#c0c0c0;border:1.5px solid #222"></div>
<svg class="a" style="left:820px;top:128px" width="90" height="25">
<defs><g id="star8"><path d="M12.5 5 v15 M5 12.5 h15 M7.2 7.2 l10.6 10.6 M17.8 7.2 l-10.6 10.6" stroke-width="1.3"/>
<path d="M10.5 6.5 l2-2.5 2 2.5 M10.5 18.5 l2 2.5 2-2.5 M6.5 10.5 l-2.5 2 2.5 2 M18.5 10.5 l2.5 2 -2.5 2 M6 8.8 v-2.8 h2.8 M19 8.8 v-2.8 h-2.8 M6 16.2 v2.8 h2.8 M19 16.2 v2.8 h-2.8" fill="none" stroke-width="1.3"/></g></defs>
<use href="#star8" stroke="#e02020"/>
<use href="#star8" stroke="#1a50d8" transform="translate(32 0)"/>
<path d="M70 20 l9-9" stroke="#e02020" stroke-width="1.8" stroke-dasharray="2 2"/><path d="M75 10 h5 v5" fill="none" stroke="#e02020" stroke-width="1.3"/><circle cx="82" cy="7" r="2" fill="#1a2a98"/>
</svg>
<div class="a" style="left:820px;top:160px;width:25px;height:12px;background:#c0c0c0;border:2px solid #222;border-bottom:none"></div>
<div class="a" style="left:852px;top:160px;width:25px;height:12px;background:#c0c0c0;border:2px solid #222;border-bottom:none"></div>
<div class="a" style="left:884px;top:160px;width:25px;height:12px;background:#c0c0c0;border:2px solid #222;border-bottom:none"></div>
<div class="a" style="left:912px;top:113px;width:27px;height:48px;background:#f8f8f8;border-right:1px solid #a0a0a0;border-bottom:1px solid #a0a0a0"></div>
<div class="t" style="left:916px;top:120px;font-size:11px;transform:rotate(90deg);transform-origin:0 0;left:934px">move</div>
<div class="a" style="left:919px;top:160px;width:20px;height:12px;background:#f0f0f0;border-top:1px solid #a0a0a0"></div>
<div class="a" style="left:738px;top:459px;width:73px;height:1px;background:#a0a0a0"></div>
<div class="a" style="left:819px;top:450px;width:98px;height:21px;border-left:1px solid #fff;border-bottom:1px solid #8a8a8a"></div><div class="a" style="left:239px;top:262px;width:500px;height:321px;background:#d7e4f2;border:1px solid #5a5a5a;border-radius:6px 6px 0 0"></div>
<div class="a" style="left:240px;top:263px;width:498px;height:30px;background:linear-gradient(#bccbdc,#d7e3f0);border-radius:5px 5px 0 0;border-top:1px solid #e8eef7"></div>
<svg class="a" style="left:251px;top:273px" width="13" height="16"><use href="#scric"/></svg>
<div class="t" style="left:269px;top:276px;font-size:11.7px;color:#9a9aa0">Script: applesplosion</div>
<div class="a" style="left:247px;top:293px;width:484px;height:290px;background:#f0f0f0"></div>
<svg class="a" style="left:247px;top:293px" width="330" height="28"><use href="#ed_tb"/></svg>
<div class="a" style="left:247px;top:321px;width:484px;height:1px;background:#a0a0a0"></div>
<div class="t" style="left:575px;top:301px;font-size:11px"><u>N</u>ame</div>
<div class="a" style="left:248px;top:322px;width:483px;height:21px;background:#f0f0f0"></div>
<div class="a" style="left:248px;top:322px;width:95px;height:21px;background:#fff;border:1px solid #a0a0a0;border-bottom:none"></div>
<div class="t" style="left:259px;top:327px;font-size:11px;letter-spacing:-0.2px">applesplosion</div>
<div class="t" style="left:333px;top:326px;font-size:11px;color:#999">×</div>
<div class="a" style="left:342px;top:324px;width:40px;height:19px;background:#e8e8e8;border:1px solid #a0a0a0;border-bottom:none"></div>
<div class="a" style="left:249px;top:343px;width:480px;height:208px;background:#222"></div>
<div class="a" style="left:249px;top:343px;width:37px;height:208px;background:#333"></div>
<div class="a" style="left:286px;top:343px;width:1px;height:208px;background:#8080c8"></div>
<div class="a" style="left:287px;top:513px;width:442px;height:17px;background:#444"></div>
<div class="a" style="left:282px;top:479px;width:3px;height:17px;background:#d09090"></div>
<div class="a" style="left:282px;top:496px;width:3px;height:17px;background:#d09090"></div>
<div class="a" style="left:282px;top:513px;width:3px;height:17px;background:#d09090"></div>
<div class="t mono" style="left:248px;top:345px;width:33px;text-align:right;font-size:13.333px;line-height:15px;color:#7c8cd0">1</div>
<div class="t mono" style="left:289px;top:345px;font-size:13.333px;line-height:15px"><span style="color:#6ad06a;font-style:italic">///applesplosion(x,y,count,speed)</span></div>
<div class="t mono" style="left:248px;top:362px;width:33px;text-align:right;font-size:13.333px;line-height:15px;color:#7c8cd0">2</div>
<div class="t mono" style="left:289px;top:362px;font-size:13.333px;line-height:15px"><span style="color:#f0a85a">var</span><span style="color:#c8d0d0"> count=</span><span style="color:#f07468">argument2</span><span style="color:#c8d0d0">;</span></div>
<div class="t mono" style="left:248px;top:379px;width:33px;text-align:right;font-size:13.333px;line-height:15px;color:#7c8cd0">3</div>
<div class="t mono" style="left:289px;top:379px;font-size:13.333px;line-height:15px"><span style="color:#f0a85a">var</span><span style="color:#c8d0d0"> curDir=</span><span style="color:#f07468">0</span><span style="color:#c8d0d0">;</span></div>
<div class="t mono" style="left:248px;top:396px;width:33px;text-align:right;font-size:13.333px;line-height:15px;color:#7c8cd0">4</div>
<div class="t mono" style="left:289px;top:396px;font-size:13.333px;line-height:15px"><span style="color:#f0a85a">var</span><span style="color:#c8d0d0"> spd=</span><span style="color:#f07468">argument3</span><span style="color:#c8d0d0">;</span></div>
<div class="t mono" style="left:248px;top:413px;width:33px;text-align:right;font-size:13.333px;line-height:15px;color:#7c8cd0">5</div>
<div class="t mono" style="left:289px;top:413px;font-size:13.333px;line-height:15px"><span style="color:#f0a85a">var</span><span style="color:#c8d0d0"> xcenter=</span><span style="color:#f07468">argument0</span><span style="color:#c8d0d0">;</span></div>
<div class="t mono" style="left:248px;top:430px;width:33px;text-align:right;font-size:13.333px;line-height:15px;color:#7c8cd0">6</div>
<div class="t mono" style="left:289px;top:430px;font-size:13.333px;line-height:15px"><span style="color:#f0a85a">var</span><span style="color:#c8d0d0"> ycenter=</span><span style="color:#f07468">argument1</span><span style="color:#c8d0d0">;</span></div>
<div class="t mono" style="left:248px;top:447px;width:33px;text-align:right;font-size:13.333px;line-height:15px;color:#7c8cd0">7</div>
<div class="t mono" style="left:289px;top:447px;font-size:13.333px;line-height:15px"><span style="color:#f0a85a">for</span><span style="color:#c8d0d0"> (i=</span><span style="color:#f07468">0</span><span style="color:#c8d0d0">; i&lt;count; i++) </span><span style="color:#f0a85a">{</span></div>
<div class="t mono" style="left:248px;top:464px;width:33px;text-align:right;font-size:13.333px;line-height:15px;color:#7c8cd0">8</div>
<div class="t mono" style="left:289px;top:464px;font-size:13.333px;line-height:15px"><span style="color:#c8d0d0">    </span><span style="color:#f0a85a">var</span><span style="color:#c8d0d0"> cherry=</span><span style="color:#f0a85a">instance_create</span><span style="color:#c8d0d0">(</span><span style="color:#f07468">x</span><span style="color:#c8d0d0">,</span><span style="color:#f07468">y</span><span style="color:#c8d0d0">,</span><span style="color:#f07468">objCherry</span><span style="color:#c8d0d0">);</span></div>
<div class="t mono" style="left:248px;top:481px;width:33px;text-align:right;font-size:13.333px;line-height:15px;color:#7c8cd0">9</div>
<div class="t mono" style="left:289px;top:481px;font-size:13.333px;line-height:15px"><span style="color:#c8d0d0">    cherry.</span><span style="color:#f07468">direction</span><span style="color:#c8d0d0">=curDir;</span></div>
<div class="t mono" style="left:248px;top:498px;width:33px;text-align:right;font-size:13.333px;line-height:15px;color:#7c8cd0">10</div>
<div class="t mono" style="left:289px;top:498px;font-size:13.333px;line-height:15px"><span style="color:#c8d0d0">    cherry.</span><span style="color:#f07468">speed</span><span style="color:#c8d0d0">=spd;</span></div>
<div class="t mono" style="left:248px;top:515px;width:33px;text-align:right;font-size:13.333px;line-height:15px;color:#d0a088">11</div>
<div class="t mono" style="left:289px;top:515px;font-size:13.333px;line-height:15px"><span style="color:#c8d0d0">    curDir+=count;</span></div>
<div class="t mono" style="left:248px;top:532px;width:33px;text-align:right;font-size:13.333px;line-height:15px;color:#7c8cd0">12</div>
<div class="t mono" style="left:289px;top:532px;font-size:13.333px;line-height:15px"><span style="color:#f0a85a">}</span></div>
<div class="a" style="left:248px;top:343px;width:1px;height:208px;background:#a0a0a0"></div>
<div class="a" style="left:248px;top:551px;width:482px;height:22px;background:#f0f0f0;border-left:1px solid #a0a0a0"></div>
<div class="t" style="left:264px;top:557px;font-size:11px;color:#888;font-weight:bold">!</div>
<div class="a" style="left:248px;top:573px;width:483px;height:1px;background:#a0a0a0"></div>
<div class="a" style="left:248px;top:574px;width:483px;height:4px;background:#f0f0f0"></div>
<div class="a" style="left:269px;top:575px;width:1px;height:3px;background:#d0d0d0"></div>
<div class="a" style="left:320px;top:575px;width:1px;height:3px;background:#d0d0d0"></div>
<div class="a" style="left:603px;top:164px;width:440px;height:293px;background:#b9d1ea;border:1px solid #000;border-radius:6px 6px 0 0;box-shadow:inset 1px 0 0 #fff,inset 0 -1px 0 #22c4e4"></div>
<div class="a" style="left:604px;top:165px;width:438px;height:30px;background:linear-gradient(#91b2d8,#b7cfe9);border-radius:5px 5px 0 0"></div>
<svg class="a" style="left:615px;top:175px" width="13" height="16"><use href="#scric"/></svg>
<div class="t" style="left:634px;top:178px;font-size:11.5px;color:#000">Event: objCherryEnemyTest_objBullet_1</div>
<svg class="a" style="left:993px;top:174px" width="32" height="17"><rect x=".5" y=".5" width="31" height="16" rx="2.5" fill="url(#btnga)" stroke="#6a85a8"/><rect x="10.5" y="8.5" width="11" height="4" rx="1" fill="#fff" stroke="#444" stroke-width="1.2"/></svg>
<div class="a" style="left:611px;top:195px;width:430px;height:253px;background:#f0f0f0"></div>
<svg class="a" style="left:611px;top:195px" width="330" height="28"><use href="#ed_tb"/></svg>
<div class="a" style="left:611px;top:223px;width:430px;height:1px;background:#a0a0a0"></div>
<div class="t" style="left:941px;top:203px;font-size:10.7px">Applies To:</div>
<svg class="a" style="left:995px;top:200px" width="20" height="18"><path d="M7.5 0 v18" stroke="#444"/><circle cx="9" cy="9" r="5.8" fill="#fff" stroke="#333" stroke-width="1.1"/><circle cx="9" cy="9" r="3.2" fill="#333"/></svg>
<div class="t" style="left:1015px;top:203px;font-size:11px">S</div>
<div class="a" style="left:611px;top:224px;width:414px;height:21px;background:#f0f0f0;border-left:1px solid #a0a0a0;border-top:1px solid #a0a0a0"></div>
<div class="a" style="left:612px;top:225px;width:45px;height:20px;background:#fff;border-right:1px solid #a0a0a0"></div>
<div class="t" style="left:618px;top:228px;font-size:11px">action</div>
<div class="a" style="left:613px;top:245px;width:412px;height:145px;background:#222"></div>
<div class="a" style="left:613px;top:245px;width:37px;height:145px;background:#333"></div>
<div class="a" style="left:650px;top:245px;width:1px;height:145px;background:#8080c8"></div>
<div class="a" style="left:651px;top:364px;width:374px;height:17px;background:#444"></div>
<div class="a" style="left:646px;top:330px;width:3px;height:17px;background:#d09090"></div>
<div class="a" style="left:646px;top:347px;width:3px;height:17px;background:#d09090"></div>
<div class="a" style="left:646px;top:364px;width:3px;height:17px;background:#d09090"></div>
<div class="t mono" style="left:612px;top:247px;width:33px;text-align:right;font-size:13.333px;line-height:15px;color:#7c8cd0">1</div>
<div class="t mono" style="left:653px;top:247px;font-size:13.333px;line-height:15px"><span style="color:#f0a85a">audio_play_sound</span><span style="color:#c8d0d0">(</span><span style="color:#f07468">sndBossHit</span><span style="color:#c8d0d0">,</span><span style="color:#f07468">0</span><span style="color:#c8d0d0">,</span><span style="color:#f07468">false</span><span style="color:#c8d0d0">);</span></div>
<div class="t mono" style="left:612px;top:264px;width:33px;text-align:right;font-size:13.333px;line-height:15px;color:#7c8cd0">2</div>
<div class="t mono" style="left:653px;top:264px;font-size:13.333px;line-height:15px"></div>
<div class="t mono" style="left:612px;top:281px;width:33px;text-align:right;font-size:13.333px;line-height:15px;color:#7c8cd0">3</div>
<div class="t mono" style="left:653px;top:281px;font-size:13.333px;line-height:15px"><span style="color:#f0a85a">with</span><span style="color:#c8d0d0"> </span><span style="color:#f0a85a">(other)</span></div>
<div class="t mono" style="left:612px;top:298px;width:33px;text-align:right;font-size:13.333px;line-height:15px;color:#7c8cd0">4</div>
<div class="t mono" style="left:653px;top:298px;font-size:13.333px;line-height:15px"><span style="color:#c8d0d0">    </span><span style="color:#f0a85a">instance_destroy</span><span style="color:#c8d0d0">();</span></div>
<div class="t mono" style="left:612px;top:315px;width:33px;text-align:right;font-size:13.333px;line-height:15px;color:#7c8cd0">5</div>
<div class="t mono" style="left:653px;top:315px;font-size:13.333px;line-height:15px"></div>
<div class="t mono" style="left:612px;top:332px;width:33px;text-align:right;font-size:13.333px;line-height:15px;color:#7c8cd0">6</div>
<div class="t mono" style="left:653px;top:332px;font-size:13.333px;line-height:15px"><span style="color:#f0a85a">instance_destroy</span><span style="color:#c8d0d0">();</span></div>
<div class="t mono" style="left:612px;top:349px;width:33px;text-align:right;font-size:13.333px;line-height:15px;color:#7c8cd0">7</div>
<div class="t mono" style="left:653px;top:349px;font-size:13.333px;line-height:15px"></div>
<div class="t mono" style="left:612px;top:366px;width:33px;text-align:right;font-size:13.333px;line-height:15px;color:#d0a088">8</div>
<div class="t mono" style="left:653px;top:366px;font-size:13.333px;line-height:15px"><span style="color:#8a88e8">applesplosion</span><span style="color:#c8d0d0">(</span><span style="color:#f07468">x</span><span style="color:#c8d0d0">,</span><span style="color:#f07468">y</span><span style="color:#c8d0d0">,</span><span style="color:#f07468">30</span><span style="color:#c8d0d0">,</span><span style="color:#f07468">8</span><span style="color:#c8d0d0">);</span></div>
<div class="a" style="left:612px;top:245px;width:1px;height:145px;background:#a0a0a0"></div>
<div class="a" style="left:765px;top:366px;width:1px;height:14px;background:#e0e0e0"></div>
<div class="a" style="left:612px;top:390px;width:413px;height:17px;background:#f0f0f0"></div>
<svg class="a" style="left:617px;top:394px" width="7" height="10"><path d="M5.5 1 L1.5 5 L5.5 9" fill="none" stroke="#505050" stroke-width="1.6"/></svg>
<div class="a" style="left:630px;top:391px;width:365px;height:15px;background:#cdcdcd"></div>
<div class="a" style="left:612px;top:407px;width:413px;height:21px;background:#f0f0f0;border-top:1px solid #a0a0a0;border-left:1px solid #a0a0a0"></div>
<div class="t" style="left:628px;top:413px;font-size:11px;color:#888;font-weight:bold">!</div>
<div class="a" style="left:611px;top:428px;width:414px;height:21px;background:#f0f0f0;border-top:1px solid #fff;border-bottom:1px solid #a0a0a0;border-left:1px solid #a0a0a0;box-shadow:inset 0 -1px 0 #fff"></div>
<div class="t" style="left:623px;top:434px;font-size:12px">8/8:&nbsp; 15</div>
<div class="a" style="left:702px;top:430px;width:1px;height:17px;background:#d8d8d8"></div>
<div class="t" style="left:706px;top:434px;font-size:12px">INS</div>
<div class="a" style="left:737px;top:430px;width:1px;height:17px;background:#d8d8d8"></div>
<div class="t" style="left:741px;top:434px;font-size:12px">Modified</div>
<div class="a" style="left:795px;top:430px;width:1px;height:17px;background:#d8d8d8"></div>
<div class="t" style="left:800px;top:434px;font-size:12px">10 pt</div>
<div class="a" style="left:837px;top:430px;width:1px;height:17px;background:#d8d8d8"></div>
<div class="t" style="left:841px;top:434px;font-size:12px">applesplosion(<b>x</b> ,y,count,speed)</div>
<div class="a" style="left:1025px;top:82px;width:3px;height:496px;background:#f0f0f0"></div>
<div class="a" style="left:1025px;top:82px;width:1px;height:496px;background:#b0b0b0"></div>
<div class="a" style="left:1027px;top:0px;width:1px;height:769px;background:#6e6e6e"></div><!-- compile form -->
<div class="a" style="left:235px;top:578px;width:790px;height:1px;background:#fff"></div>
<div class="a" style="left:235px;top:579px;width:792px;height:190px;background:#f0f0f0"></div>
<div class="a" style="left:234px;top:579px;width:794px;height:20px;background:#f0f0f0;border:1px solid #e2e2e2;border-radius:4px"></div>
<div class="t" style="left:240px;top:584px;font-size:11px;letter-spacing:-0.25px;color:#000">CompileForm - Compiled at:3:35:40 PM</div>
<svg class="a" style="left:1014px;top:581px" width="14" height="17"><rect x=".5" y=".5" width="16" height="16" rx="3" fill="#f4f4f4" stroke="#bdbdbd"/><path d="M4 5 l6 7 M10 5 l-6 7" stroke="#7a7a7a" stroke-width="3"/><path d="M4 5 l6 7 M10 5 l-6 7" stroke="#fff" stroke-width="1.2"/></svg>
<div class="a" style="left:366px;top:600px;width:659px;height:17px;background:#333"></div>
<div class="a" style="left:286px;top:600px;width:80px;height:18px;background:#e6e6e6;border:1px solid #d0d0d0;border-bottom:none"></div>
<div class="t" style="left:242px;top:603px;font-size:11px;letter-spacing:-0.1px">Compile</div>
<div class="t" style="left:290px;top:604px;font-size:11.2px;letter-spacing:-0.2px">Source Control</div>
<div class="a" style="left:237px;top:618px;width:788px;height:1px;background:#fff"></div>
<div class="a" style="left:238px;top:621px;width:787px;height:148px;border:1px solid #a0a0a0;border-bottom:none;background:#f0f0f0"></div>
<div class="a" style="left:240px;top:623px;width:773px;height:146px;background:#202020"></div>
<div class="t" style="left:240px;top:625px;font-size:11px;line-height:13px;color:#f4f0e4">Pause event has been unregistered
Pause event has been registered for this frame
Pause event has been unregistered
Pause event has been registered for this frame
Pause event has been unregistered
---------------------------------------------------------------------
minFPS, maxFPS, avgFPS
-51, 2801, 533
---------------------------------------------------------------------
Compile finished: 3:36:16 PM</div>
<div class="a" style="left:1013px;top:623px;width:12px;height:146px;background:#f0f0f0"></div>
<svg class="a" style="left:1014px;top:628px" width="10" height="7"><path d="M1 6 L5 2 L9 6" fill="none" stroke="#606060" stroke-width="1.5"/></svg>
<div class="a" style="left:1013px;top:739px;width:12px;height:17px;background:#cdcdcd"></div>
<svg class="a" style="left:1014px;top:760px" width="10" height="7"><path d="M1 1 L5 5 L9 1" fill="none" stroke="#606060" stroke-width="1.5"/></svg>
<div class="a" style="left:1025px;top:579px;width:2px;height:190px;background:#c8c8c8"></div>
</body></html>
